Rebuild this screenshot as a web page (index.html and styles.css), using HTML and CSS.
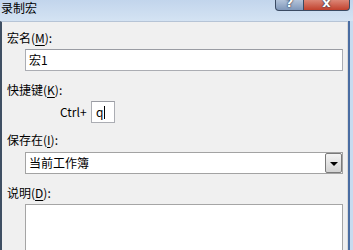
FILE: index.html
```html
<!DOCTYPE html>
<html lang="zh-CN">
<head>
    <meta charset="UTF-8">
    <title>录制宏</title>
    <link rel="stylesheet" href="styles.css">
</head>
<body>
<div class="window">
    <div class="titlebar">
        <span class="title">录制宏</span>
        <div class="caption">
            <div class="cap-btn help"><span>?</span></div>
            <div class="cap-btn close"><span>x</span></div>
        </div>
    </div>
    <div class="body-row">
        <div class="client">
            <label class="lbl">宏名(<u>M</u>):</label>
            <div class="box field">宏1</div>

            <label class="lbl gap-l">快捷键(<u>K</u>):</label>
            <div class="shortcut">
                <span class="ctrl">Ctrl+</span>
                <div class="box key">q<span class="caret"></span></div>
            </div>

            <label class="lbl gap-s">保存在(<u>I</u>):</label>
            <div class="box select">
                <span class="sel-text">当前工作簿</span>
                <span class="drop"><i class="tri"></i></span>
            </div>

            <label class="lbl gap-l">说明(<u>D</u>):</label>
            <div class="box memo"></div>
        </div>
        <div class="frame-edge"></div>
    </div>
</div>
</body>
</html>
```

FILE: styles.css
```css
/* 对话框基础样式 */
body { margin: 0; background: #c8dbef; font-family: "Noto Sans CJK SC", "Liberation Sans", sans-serif; font-size: 12px; color: #000; }
.window { width: 353px; height: 250px; overflow: hidden; display: flex; flex-direction: column; }

/* 标题栏 */
.titlebar { height: 21px; flex: none; display: flex; align-items: flex-start; padding-right: 3px; background: linear-gradient(#c2d5ec, #d4e3f3); }
.title { line-height: 16px; padding-left: 1px; }
.caption { margin-left: auto; display: flex; }
.cap-btn { height: 11px; box-sizing: border-box; border: 1px solid #3a4a62; border-top: none; overflow: hidden; color: #fff; text-align: center; font: bold 13px "DejaVu Sans", sans-serif; }
.cap-btn span { display: block; line-height: 11px; margin-top: -3px; text-shadow: 0 0 2px #23324a, 0 0 1px #23324a; }
.help { width: 29px; border-radius: 0 0 0 4px; background: linear-gradient(#b3c4da, #7f97b9); }
.close { width: 46px; border-left: none; border-radius: 0 0 4px 0; background: linear-gradient(#dc8676, #c1412d); }

/* 客户区 */
.body-row { flex: 1; display: flex; }
.client { width: 348px; box-sizing: border-box; background: #f0f0f0; border-left: 2px solid #3f4f63; border-top: 1px solid #b6c4d6; border-right: 1px solid #d9d9d9; padding: 8px 4px 0 5px; display: flex; flex-direction: column; align-items: flex-start; }
.frame-edge { width: 2px; background: #4a6da2; }

.lbl { display: block; line-height: 16px; }
.gap-l { margin-top: 11px; }
.gap-s { margin-top: 9px; }
u { text-decoration-thickness: 1px; text-underline-offset: 2px; }

.box { box-sizing: border-box; background: #fff; border: 1px solid #abadb3; border-top-color: #9a9ca3; }
.field { align-self: stretch; margin: 3px 0 0 18px; height: 22px; line-height: 20px; padding-left: 3px; }

.shortcut { display: flex; align-items: center; margin: 3px 0 0 53px; }
.ctrl { width: 31px; line-height: 16px; }
.key { width: 24px; height: 22px; line-height: 20px; padding-left: 4px; display: flex; align-items: center; }
.caret { width: 1px; height: 13px; background: #000; margin-left: 1px; }

.select { align-self: stretch; margin: 4px 0 0 18px; height: 22px; display: flex; align-items: center; border-color: #a3a3a3; }
.sel-text { flex: 1; padding-left: 3px; line-height: 20px; }
.drop { width: 17px; height: 20px; box-sizing: border-box; border: 1px solid #7a7a7a; border-radius: 2px; background: linear-gradient(#f4f4f4, #d2d2d2); display: flex; align-items: center; justify-content: center; }
.tri { width: 0; height: 0; border-left: 4px solid transparent; border-right: 4px solid transparent; border-top: 4px solid #000; margin-top: 1px; }

.memo { align-self: stretch; margin: 3px 0 0 18px; height: 60px; border-color: #a5a5a5; }
```
